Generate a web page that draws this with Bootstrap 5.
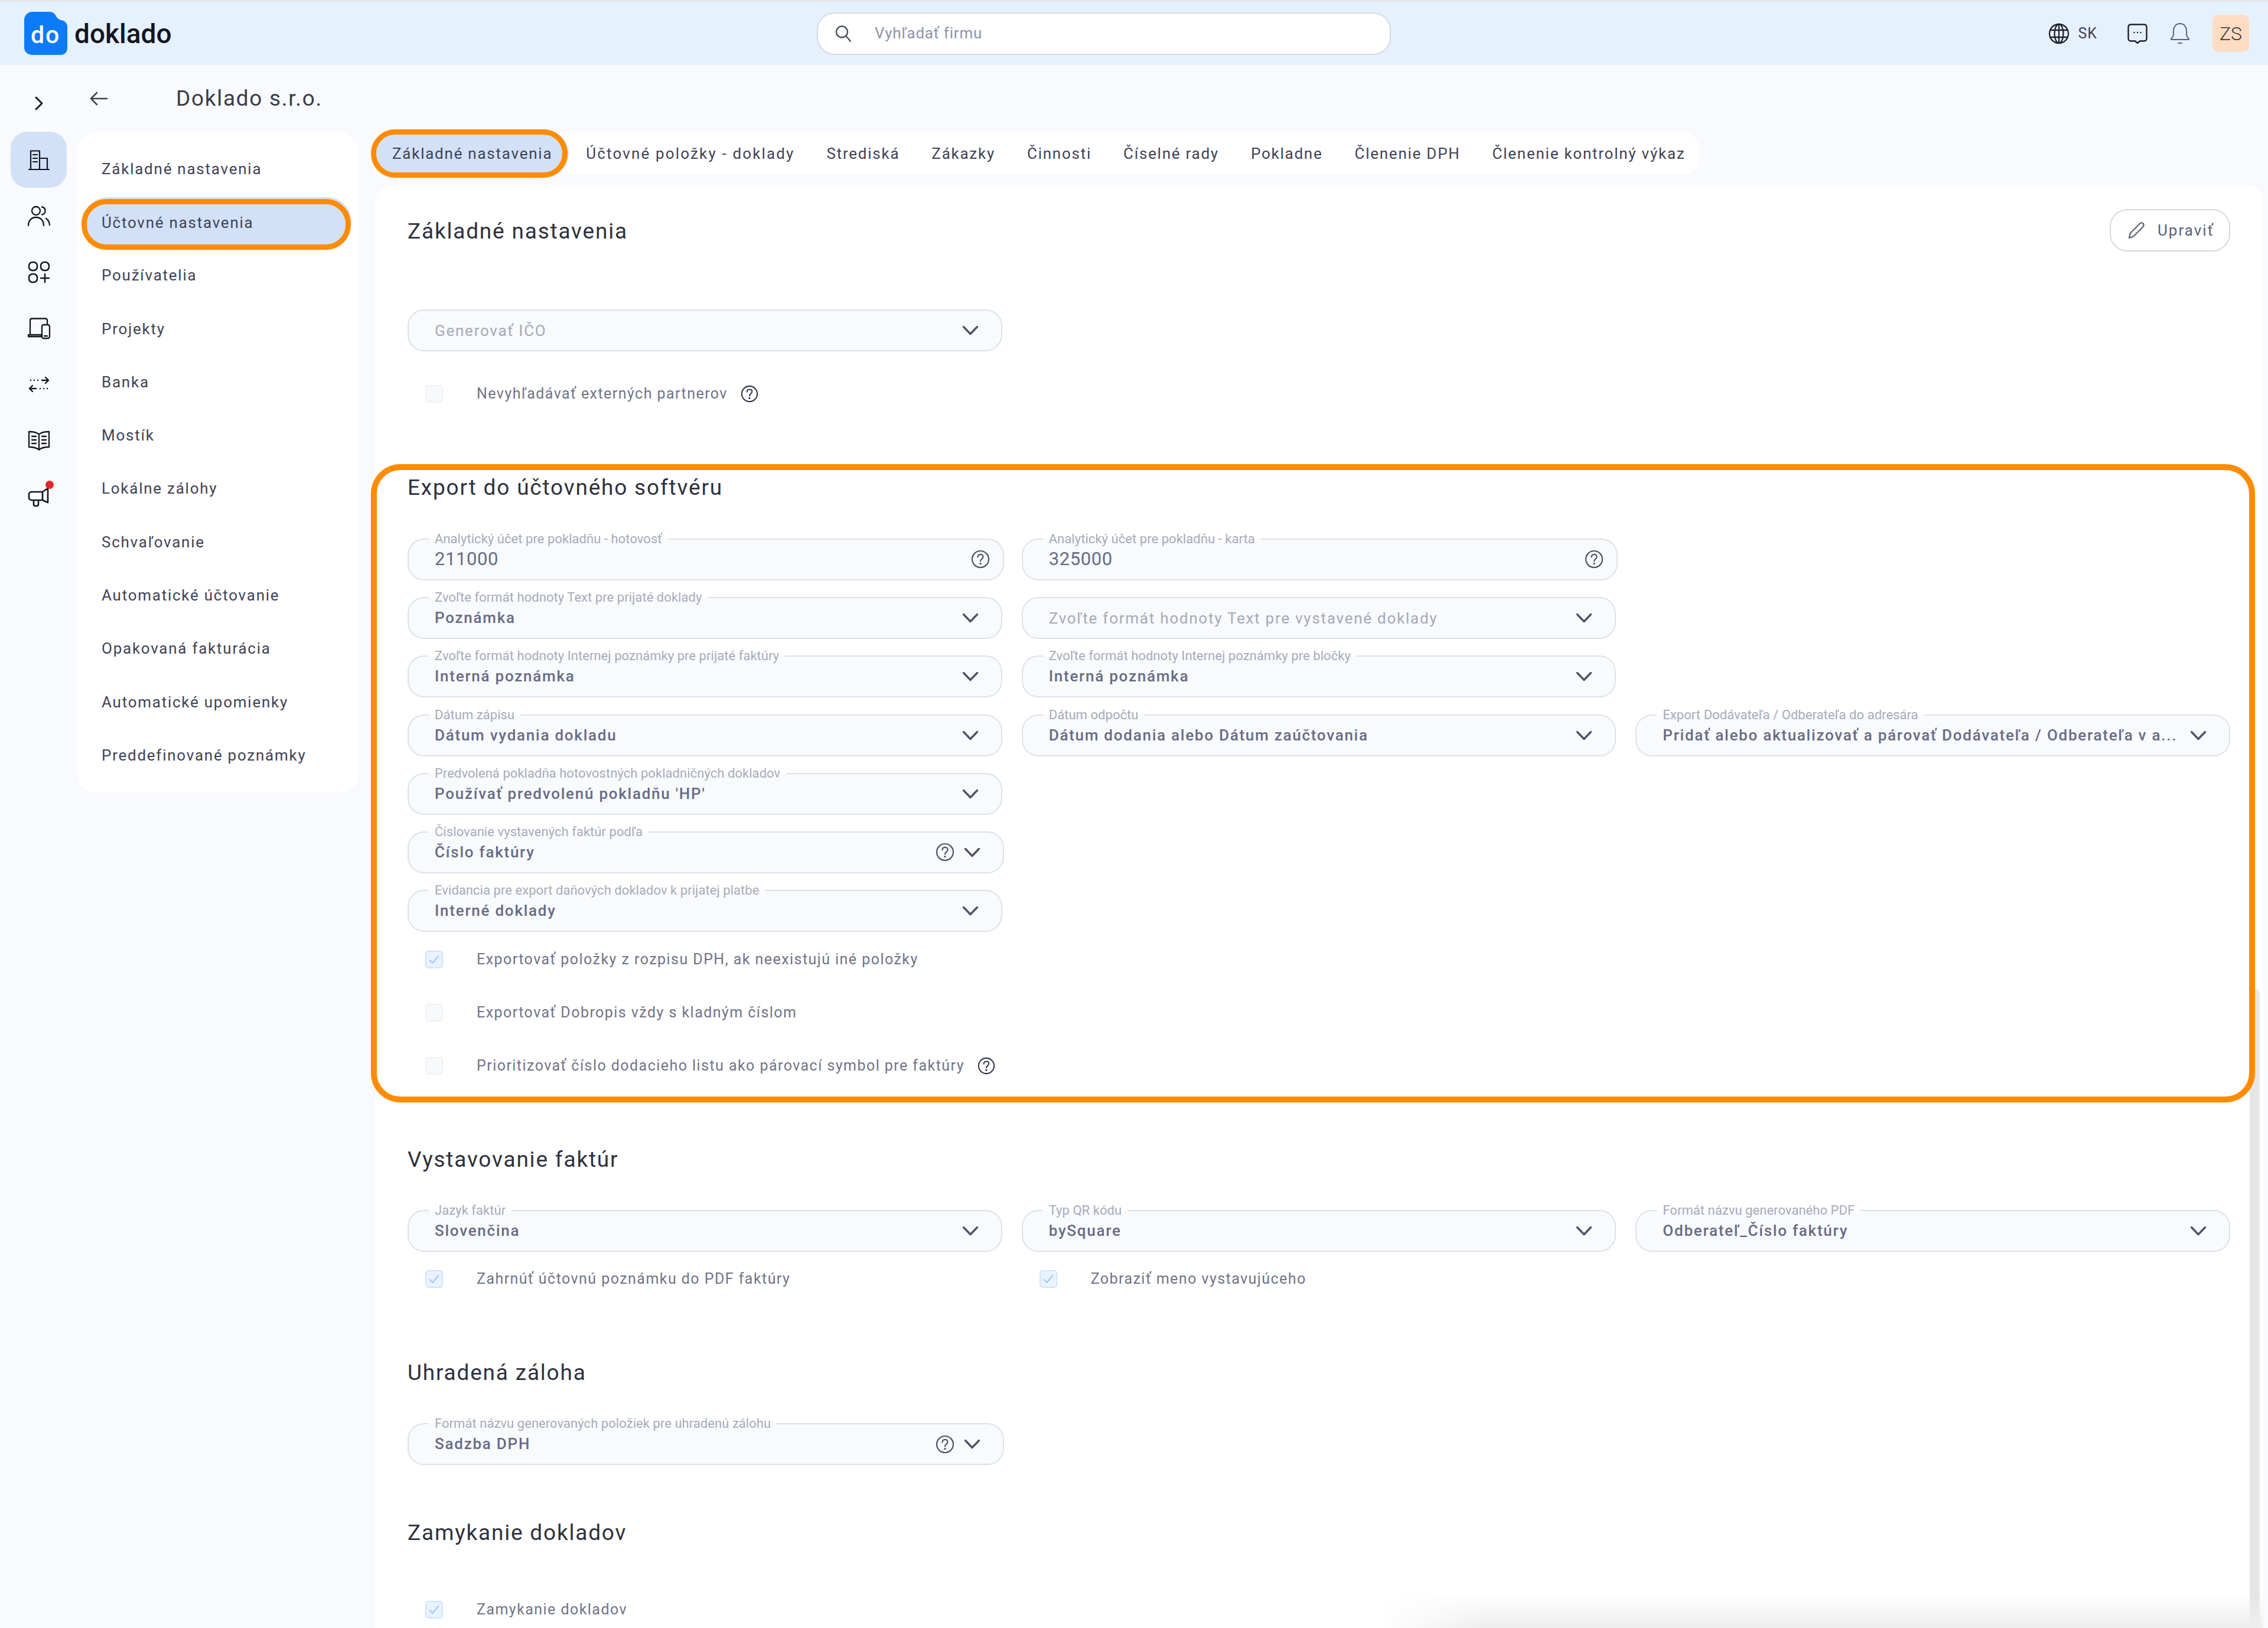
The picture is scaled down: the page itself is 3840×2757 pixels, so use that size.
<!DOCTYPE html>
<html lang="sk">
<head>
  <meta charset="UTF-8" />
  <title>Doklado</title>
  <link href="https://cdn.jsdelivr.net/npm/bootstrap@5.3.0/dist/css/bootstrap.min.css" rel="stylesheet" />
  <style>
    html, body { height: 100%; }
    body {
      width: 3840px; height: 2757px; overflow: hidden;
      background: #f9fafd; color: #3f4254;
      font-family: Roboto, "Liberation Sans", sans-serif;
      font-size: 26px; letter-spacing: 1.75px;
    }
    svg { flex-shrink: 0; display: block; }
    .ic { fill: none; stroke: currentColor; stroke-linecap: round; stroke-linejoin: round; }

    /* top bar */
    .topbar { height: 110px; padding: 0; background: #e6f1fe; border-top: 3px solid #e3e5e9; flex-wrap: nowrap; justify-content: flex-start; align-items: center; }
    .brand-wrap { width: 1383px; padding-left: 41px; gap: 12px; }
    .brand-name { font-size: 46px; font-weight: 500; color: #14161f; letter-spacing: 0; line-height: 1; }
    .search-box { width: 972px; height: 72px; background: #fff; border: 2px solid #d5d9e0; border-radius: 30px; padding-left: 28px; gap: 38px; color: #4c5268; }
    .search-box span { font-size: 26px; letter-spacing: .8px; color: #8d93ab; }
    .top-right { margin-left: auto; padding-right: 32px; color: #1e2029; }
    .top-lang { font-size: 25px; letter-spacing: 1px; color: #3f4254; margin: 0 50px 0 14px; }
    .top-bell { color: #5b6078; margin: 0 38px 0 37px; }
    .ava { width: 62px; height: 63px; border-radius: 10px; background: #fddcc3; font-size: 32px; font-weight: 300; letter-spacing: 0; color: #3b3a3a; }

    /* left rail */
    .rail { width: 131px; padding-left: 18px; }
    .rail-top { height: 113px; width: 95px; padding-top: 52px; color: #1b1d26; }
    .rail-btn { width: 95px; height: 95px; border-radius: 28px; color: #14161f; position: relative; }
    .rail-btn.on { background: #d2e1f8; }
    .rail-dot { position: absolute; top: 21px; left: 59px; width: 14px; height: 14px; border-radius: 50%; background: #e5252a; }

    /* settings menu */
    .menu-col { width: 504px; }
    .menu-head { height: 113px; color: #3f4254; }
    .menu-back { width: 167px; padding-left: 20px; }
    .menu-title { font-size: 37px; letter-spacing: 1.7px; color: #3a3c48; line-height: 1; }
    .menu-card { width: 476px; background: #fff; border-radius: 30px; padding: 16px 0 17px; margin-top: 2px; }
    .menu-card .list-group-item { height: 90.3px; padding: 0 0 0 41px; display: flex; align-items: center; border: 0; background: transparent; color: #3f4254; }
    .menu-card .list-group-item.active { height: 86px; margin: 6px 13px -1.7px 7px; width: auto; padding: 0 0 6px 25px; background: #d2e1f8; color: #3f4254; border: 9px solid #ff8c00; border-radius: 42px; box-shadow: 2px -4px 0 -1px #d2e1f8; }

    /* tabs */
    .tabs-col { width: 3197px; padding-top: 114px; }
    .tabs-bar { height: 72px; width: 2242px; background: #fff; border-radius: 0 28px 28px 0; flex-wrap: nowrap; align-items: center; margin-bottom: 17px; }
    .tabs-bar .nav-link { padding: 0 27px; color: #3f4254; white-space: nowrap; }
    .tabs-bar .nav-link.active { height: 82px; margin: 0 4px 0 -7px; padding: 0 17px 0 27px; display: flex; align-items: center; background: #d2e1f8; color: #3f4254; border: 9px solid #ff8c00; border-radius: 41px; box-shadow: 3px 0 0 -1px #d2e1f8; }
    .tabs-bar .nav-link.tab-wide { letter-spacing: 2.15px; }

    /* main card */
    .main-card { height: 2444px; background: #fff; border-radius: 30px 30px 0 0; padding: 41px 56px 0 55px; position: relative; }
    .sec-title { font-size: 37px; font-weight: 400; line-height: 63px; height: 60px; letter-spacing: 1.8px; color: #2f313c; margin: 0; }
    .hl-sec .sec-title { margin-top: -2px; }
    .edit-btn { width: 204px; height: 72px; border: 2px solid #d5d9e0; border-radius: 30px; color: #5b6078; background: #fff; font-size: 26px; letter-spacing: 2px; gap: 19px; padding: 0 0 0 28px; }
    .hl-sec { position: relative; z-index: 1; margin: 94px -42px 0 -62px; padding: 0 32px 27px 52px; border: 10px solid #ff8c00; border-radius: 50px; }
    .fld-row { --bs-gutter-x: 33px; --bs-gutter-y: 28.2px; margin-top: 28.8px; }

    /* outlined field with the label sitting on its border */
    .fld { position: relative; height: 71px; padding: 0 38px 0 44px; display: flex; align-items: center; gap: 16px; background: #f8fafc; border: 2px solid #dde1e8; border-radius: 28px; color: #666b86; font-weight: 500; font-size: 26px; letter-spacing: 1.75px; }
    .fld-lab { position: absolute; top: -14px; left: 34px; padding: 0 10px; height: 26px; line-height: 26px; font-size: 22px; font-weight: 400; letter-spacing: .05px; color: #a6abbb; background: linear-gradient(#fff 50%, #f8fafc 50%); white-space: nowrap; margin: 0; }
    .fld-val { flex: 1; min-width: 0; white-space: nowrap; overflow: hidden; }
    .fld-num { font-size: 31px; letter-spacing: .6px; font-weight: 400; }
    .fld-ph { color: #a3a9b9; font-weight: 400; padding-top: 2px; }
    .fld-wide { margin-right: -3px; }
    .fld-help { padding-right: 22px; }
    .fld-ic { color: #4c5268; }
    .fld-gen { margin-top: 98px; width: 1007px; }

    /* checkboxes */
    .chk-row { height: 50px; padding: 0 0 0 30px; margin: 0; display: flex; align-items: center; gap: 57px; }
    .chk-row .form-check-input { float: none; width: 30px; height: 30px; margin: 0; background-color: #f8f9fb; border: 2px solid #eef0f3; border-radius: 5px; opacity: 1; flex-shrink: 0; }
    .chk-row .form-check-input:checked { background-color: #e9f3ff; border-color: #cfe4fd; background-size: 26px; background-image: url("data:image/svg+xml,%3csvg xmlns='http://www.w3.org/2000/svg' viewBox='0 0 20 20'%3e%3cpath fill='none' stroke='%23a4caf6' stroke-width='1.8' d='M4 10.5l4 4L16 5'/%3e%3c/svg%3e"); }
    .chk-row .form-check-input[disabled] ~ .form-check-label { opacity: 1; font-size: 25px; letter-spacing: 1.45px; color: #6f7387; white-space: nowrap; }
    .chk-help { margin-left: -35px; color: #33364a; }

    .scroll-thumb { position: absolute; top: 1362px; bottom: 0; left: 3174px; width: 17px; background: #e6e6e6; border-radius: 6px 6px 0 0; }
    .bottom-fade { position: absolute; left: 1700px; right: 0; bottom: 0; height: 60px; background: linear-gradient(transparent, #eeeeee); -webkit-mask-image: linear-gradient(90deg, transparent, #000 12%); mask-image: linear-gradient(90deg, transparent, #000 12%); }
  </style>
</head>
<body>

<svg width="0" height="0" class="position-absolute">
  <defs>
    <symbol id="i-chev" viewBox="0 0 28 17"><path d="M2.5 2.5 14 14.500 25.500 2.500" fill="none" stroke="currentColor" stroke-width="3.4" stroke-linecap="round" stroke-linejoin="round"/></symbol>
    <symbol id="i-help" viewBox="0 0 32 32"><g fill="none" stroke="currentColor" stroke-width="2.2" stroke-linecap="round"><circle cx="16" cy="16" r="14"/><path d="M11.5 12.5c0-2.8 2-4.6 4.6-4.6s4.5 1.7 4.5 4.1c0 3.6-4.6 3.7-4.6 7.5"/></g><circle cx="16" cy="23.6" r="1.7" fill="currentColor"/></symbol>
  </defs>
</svg>

<!-- TOP BAR -->
<nav class="navbar topbar">
  <div class="brand-wrap d-flex align-items-center">
    <svg width="73" height="73" viewBox="0 0 73 73">
      <path d="M14 0h28c7 0 10 3 13 9 2 3 4 4 7 5 7 1 11 5 11 12v35c0 8-5 12-12 12H14C6 73 0 68 0 60V14C0 6 6 0 14 0z" fill="#0d7bf7"/>
      <text x="36" y="53" text-anchor="middle" font-family="Roboto, sans-serif" font-size="41" font-weight="500" fill="#fff">do</text>
    </svg>
    <span class="brand-name">doklado</span>
  </div>
  <div class="search-box d-flex align-items-center">
    <svg width="30" height="30" viewBox="0 0 30 30" class="ic" stroke-width="2.4"><circle cx="12.5" cy="12" r="9.5"/><path d="M19.5 19 27 28"/></svg>
    <span>Vyhľadať firmu</span>
  </div>
  <div class="top-right d-flex align-items-center">
    <svg width="36" height="36" viewBox="0 0 36 36" class="ic" stroke-width="2.3"><circle cx="18" cy="18" r="16"/><ellipse cx="18" cy="18" rx="7.5" ry="16"/><path d="M3.5 12h29M3.5 24h29M18 2v32"/></svg>
    <span class="top-lang">SK</span>
    <svg width="36" height="36" viewBox="0 0 36 36" class="ic" stroke-width="2.4"><path d="M7 2.500h22c3 0 4.500 1.500 4.500 4.500v19c0 3-1.500 4.500-4.500 4.500h-7L18 34l-4-3.500H7c-3 0-4.500-1.500-4.500-4.500V7c0-3 1.500-4.500 4.500-4.500z"/><path d="M12.500 16h.1M18 16h.1M23.500 16h.1"/></svg>
    <svg width="34" height="38" viewBox="0 0 34 38" class="ic top-bell" stroke-width="2"><path d="M2 28c3-3 4-5 4-10v-4C6 7 10.500 2 17 2s11 5 11 12v4c0 5 1 7 4 10v1H2zM14 35h6"/></svg>
    <div class="ava d-flex align-items-center justify-content-center">ZS</div>
  </div>
</nav>

<div class="d-flex">
  <!-- RAIL -->
  <div class="rail">
    <div class="rail-top d-flex justify-content-center">
      <svg width="16" height="26" viewBox="0 0 16 26" class="ic" stroke-width="3"><path d="M3 3l10 10L3 23"/></svg>
    </div>
    <div class="rail-btn on d-flex align-items-center justify-content-center">
      <svg width="38" height="38" viewBox="0 0 38 38" class="ic" stroke-width="2.2"><path d="M2 35h34M5 35V3.500h15V35M21 16h12v19M9 10h7M9 16h7M9 22h7"/></svg>
    </div>
    <div class="rail-btn d-flex align-items-center justify-content-center">
      <svg width="40" height="36" viewBox="0 0 40 36" class="ic" stroke-width="2.3"><circle cx="15" cy="9" r="7"/><path d="M25 2.500c3.500.5 5.500 3.200 5.500 6.500s-2 6-5.500 6.500M2 34c0-8 5-14 13-14s13 6 13 14M32 22c3.500 2 5.500 6 6 11"/></svg>
    </div>
    <div class="rail-btn d-flex align-items-center justify-content-center">
      <svg width="38" height="38" viewBox="0 0 38 38" class="ic" stroke-width="2.5"><rect x="2" y="2" width="14" height="14" rx="6"/><rect x="22" y="2" width="14" height="14" rx="6"/><rect x="2" y="22" width="14" height="14" rx="6"/><path d="M29 22v14M22 29h14"/></svg>
    </div>
    <div class="rail-btn d-flex align-items-center justify-content-center">
      <svg width="40" height="38" viewBox="0 0 40 38" class="ic" stroke-width="2.3"><path d="M5 28V6c0-2 1.500-3.500 3.500-3.500h22c2 0 3.500 1.500 3.500 3.500v5M2 30h22v3H2z"/><rect x="25" y="13" width="13" height="23" rx="3"/><path d="M29 32h5"/></svg>
    </div>
    <div class="rail-btn d-flex align-items-center justify-content-center">
      <svg width="36" height="30" viewBox="0 0 36 30" class="ic" stroke-width="2.4"><path d="M4 8h.1M10 8h.1M16 8h.1M23 8h11M29 3l5 5-5 5M32 22h.1M26 22h.1M20 22h.1M13 22H2M7 17l-5 5 5 5"/></svg>
    </div>
    <div class="rail-btn d-flex align-items-center justify-content-center">
      <svg width="38" height="34" viewBox="0 0 38 34" class="ic" stroke-width="2.3"><path d="M19 6.500C15 3 9 2 2 2v26c7 0 13 1 17 5 4-4 10-5 17-5V2c-7 0-13 1-17 4.500zM19 6.500V33M7 10h7M7 16h7M7 22h7M24 10h7M24 16h7M24 22h7"/></svg>
    </div>
    <div class="rail-btn d-flex align-items-center justify-content-center">
      <svg width="38" height="36" viewBox="0 0 38 36" class="ic" stroke-width="2.6"><path d="M6 10h19l9-6v24l-9-4H6c-2 0-4-2-4-3v-8c0-1 2-3 4-3zM25 10v14M10 24v7c0 2 2 3 4 3s4-1 4-3v-7"/></svg>
      <span class="rail-dot"></span>
    </div>
  </div>

  <!-- SETTINGS MENU -->
  <div class="menu-col">
    <div class="menu-head d-flex align-items-center">
      <div class="menu-back">
        <svg width="32" height="26" viewBox="0 0 32 26" class="ic" stroke-width="2.6"><path d="M30 13H3M13 3 3 13l10 10"/></svg>
      </div>
      <div class="menu-title">Doklado s.r.o.</div>
    </div>
    <div class="menu-card list-group list-group-flush">
      <a class="list-group-item">Základné nastavenia</a>
      <a class="list-group-item active">Účtovné nastavenia</a>
      <a class="list-group-item">Používatelia</a>
      <a class="list-group-item">Projekty</a>
      <a class="list-group-item">Banka</a>
      <a class="list-group-item">Mostík</a>
      <a class="list-group-item">Lokálne zálohy</a>
      <a class="list-group-item">Schvaľovanie</a>
      <a class="list-group-item">Automatické účtovanie</a>
      <a class="list-group-item">Opakovaná fakturácia</a>
      <a class="list-group-item">Automatické upomienky</a>
      <a class="list-group-item">Preddefinované poznámky</a>
    </div>
  </div>

  <!-- TABS + FORM -->
  <div class="tabs-col">
    <ul class="nav tabs-bar">
      <li class="nav-item"><a class="nav-link active">Základné nastavenia</a></li>
      <li class="nav-item"><a class="nav-link tab-wide">Účtovné položky - doklady</a></li>
      <li class="nav-item"><a class="nav-link">Strediská</a></li>
      <li class="nav-item"><a class="nav-link">Zákazky</a></li>
      <li class="nav-item"><a class="nav-link">Činnosti</a></li>
      <li class="nav-item"><a class="nav-link">Číselné rady</a></li>
      <li class="nav-item"><a class="nav-link">Pokladne</a></li>
      <li class="nav-item"><a class="nav-link">Členenie DPH</a></li>
      <li class="nav-item"><a class="nav-link">Členenie kontrolný výkaz</a></li>
    </ul>

    <div class="main-card">
      <div class="d-flex justify-content-between align-items-center">
        <h2 class="sec-title">Základné nastavenia</h2>
        <button class="btn edit-btn d-flex align-items-center" type="button">
          <svg width="32" height="32" viewBox="0 0 32 32" class="ic" stroke-width="2.2"><path d="M3 29l1.500-7.500L21 4.500c1.500-1.500 4-1.500 5.500 0s1.500 4 0 5.500L10 26.500z"/></svg>
          Upraviť
        </button>
      </div>

      <div class="fld fld-gen">
        <span class="fld-val fld-ph">Generovať IČO</span>
        <svg width="28" height="17" class="fld-ic"><use href="#i-chev"/></svg>
      </div>
      <div class="form-check chk-row" style="margin-top:47px">
        <input class="form-check-input" type="checkbox" disabled />
        <label class="form-check-label">Nevyhľadávať externých partnerov</label>
        <svg width="30" height="30" class="chk-help"><use href="#i-help"/></svg>
      </div>

      <div class="hl-sec">
        <h2 class="sec-title">Export do účtovného softvéru</h2>
        <div class="row fld-row" style="margin-top:29.8px">
          <div class="col-4"><div class="fld fld-wide fld-help"><label class="fld-lab">Analytický účet pre pokladňu - hotovosť</label><span class="fld-val fld-num">211000</span><svg width="32" height="32" class="fld-ic"><use href="#i-help"/></svg></div></div>
          <div class="col-4"><div class="fld fld-wide fld-help"><label class="fld-lab">Analytický účet pre pokladňu - karta</label><span class="fld-val fld-num">325000</span><svg width="32" height="32" class="fld-ic"><use href="#i-help"/></svg></div></div>
          <div class="col-4"></div>

          <div class="col-4"><div class="fld"><label class="fld-lab">Zvoľte formát hodnoty Text pre prijaté doklady</label><span class="fld-val">Poznámka</span><svg width="28" height="17" class="fld-ic"><use href="#i-chev"/></svg></div></div>
          <div class="col-4"><div class="fld"><span class="fld-val fld-ph">Zvoľte formát hodnoty Text pre vystavené doklady</span><svg width="28" height="17" class="fld-ic"><use href="#i-chev"/></svg></div></div>
          <div class="col-4"></div>

          <div class="col-4"><div class="fld"><label class="fld-lab">Zvoľte formát hodnoty Internej poznámky pre prijaté faktúry</label><span class="fld-val">Interná poznámka</span><svg width="28" height="17" class="fld-ic"><use href="#i-chev"/></svg></div></div>
          <div class="col-4"><div class="fld"><label class="fld-lab">Zvoľte formát hodnoty Internej poznámky pre bločky</label><span class="fld-val">Interná poznámka</span><svg width="28" height="17" class="fld-ic"><use href="#i-chev"/></svg></div></div>
          <div class="col-4"></div>

          <div class="col-4"><div class="fld"><label class="fld-lab">Dátum zápisu</label><span class="fld-val">Dátum vydania dokladu</span><svg width="28" height="17" class="fld-ic"><use href="#i-chev"/></svg></div></div>
          <div class="col-4"><div class="fld"><label class="fld-lab">Dátum odpočtu</label><span class="fld-val">Dátum dodania alebo Dátum zaúčtovania</span><svg width="28" height="17" class="fld-ic"><use href="#i-chev"/></svg></div></div>
          <div class="col-4"><div class="fld"><label class="fld-lab">Export Dodávateľa / Odberateľa do adresára</label><span class="fld-val">Pridať alebo aktualizovať a párovať Dodávateľa / Odberateľa v a...</span><svg width="28" height="17" class="fld-ic"><use href="#i-chev"/></svg></div></div>

          <div class="col-4"><div class="fld"><label class="fld-lab">Predvolená pokladňa hotovostných pokladničných dokladov</label><span class="fld-val">Používať predvolenú pokladňu 'HP'</span><svg width="28" height="17" class="fld-ic"><use href="#i-chev"/></svg></div></div>
          <div class="col-8"></div>

          <div class="col-4"><div class="fld fld-wide"><label class="fld-lab">Číslovanie vystavených faktúr podľa</label><span class="fld-val">Číslo faktúry</span><svg width="32" height="32" class="fld-ic"><use href="#i-help"/></svg><svg width="28" height="17" class="fld-ic"><use href="#i-chev"/></svg></div></div>
          <div class="col-8"></div>

          <div class="col-4"><div class="fld"><label class="fld-lab">Evidancia pre export daňových dokladov k prijatej platbe</label><span class="fld-val">Interné doklady</span><svg width="28" height="17" class="fld-ic"><use href="#i-chev"/></svg></div></div>
          <div class="col-8"></div>
        </div>

        <div class="form-check chk-row" style="margin-top:22px">
          <input class="form-check-input" type="checkbox" checked disabled />
          <label class="form-check-label">Exportovať položky z rozpisu DPH, ak neexistujú iné položky</label>
        </div>
        <div class="form-check chk-row" style="margin-top:40px">
          <input class="form-check-input" type="checkbox" disabled />
          <label class="form-check-label">Exportovať Dobropis vždy s kladným číslom</label>
        </div>
        <div class="form-check chk-row" style="margin-top:40px">
          <input class="form-check-input" type="checkbox" disabled />
          <label class="form-check-label">Prioritizovať číslo dodacieho listu ako párovací symbol pre faktúry</label>
          <svg width="30" height="30" class="chk-help"><use href="#i-help"/></svg>
        </div>
      </div>

      <h2 class="sec-title" style="margin-top:65px">Vystavovanie faktúr</h2>
      <div class="row fld-row">
        <div class="col-4"><div class="fld"><label class="fld-lab">Jazyk faktúr</label><span class="fld-val">Slovenčina</span><svg width="28" height="17" class="fld-ic"><use href="#i-chev"/></svg></div></div>
        <div class="col-4"><div class="fld"><label class="fld-lab">Typ QR kódu</label><span class="fld-val">bySquare</span><svg width="28" height="17" class="fld-ic"><use href="#i-chev"/></svg></div></div>
        <div class="col-4"><div class="fld"><label class="fld-lab">Formát názvu generovaného PDF</label><span class="fld-val">Odberateľ_Číslo faktúry</span><svg width="28" height="17" class="fld-ic"><use href="#i-chev"/></svg></div></div>
      </div>
      <div class="row" style="--bs-gutter-x:33px;margin-top:21px">
        <div class="col-4">
          <div class="form-check chk-row">
            <input class="form-check-input" type="checkbox" checked disabled />
            <label class="form-check-label">Zahrnúť účtovnú poznámku do PDF faktúry</label>
          </div>
        </div>
        <div class="col-4">
          <div class="form-check chk-row">
            <input class="form-check-input" type="checkbox" checked disabled />
            <label class="form-check-label">Zobraziť meno vystavujúceho</label>
          </div>
        </div>
      </div>

      <h2 class="sec-title" style="margin-top:102px">Uhradená záloha</h2>
      <div class="row fld-row">
        <div class="col-4"><div class="fld fld-wide"><label class="fld-lab">Formát názvu generovaných položiek pre uhradenú zálohu</label><span class="fld-val">Sadzba DPH</span><svg width="32" height="32" class="fld-ic"><use href="#i-help"/></svg><svg width="28" height="17" class="fld-ic"><use href="#i-chev"/></svg></div></div>
      </div>

      <h2 class="sec-title" style="margin-top:83px">Zamykanie dokladov</h2>
      <div class="form-check chk-row" style="margin-top:77px">
        <input class="form-check-input" type="checkbox" checked disabled />
        <label class="form-check-label">Zamykanie dokladov</label>
      </div>

      <div class="scroll-thumb"></div>
      <div class="bottom-fade"></div>
    </div>
  </div>
</div>

<script src="https://cdn.jsdelivr.net/npm/bootstrap@5.3.0/dist/js/bootstrap.bundle.min.js"></script>
</body>
</html>
